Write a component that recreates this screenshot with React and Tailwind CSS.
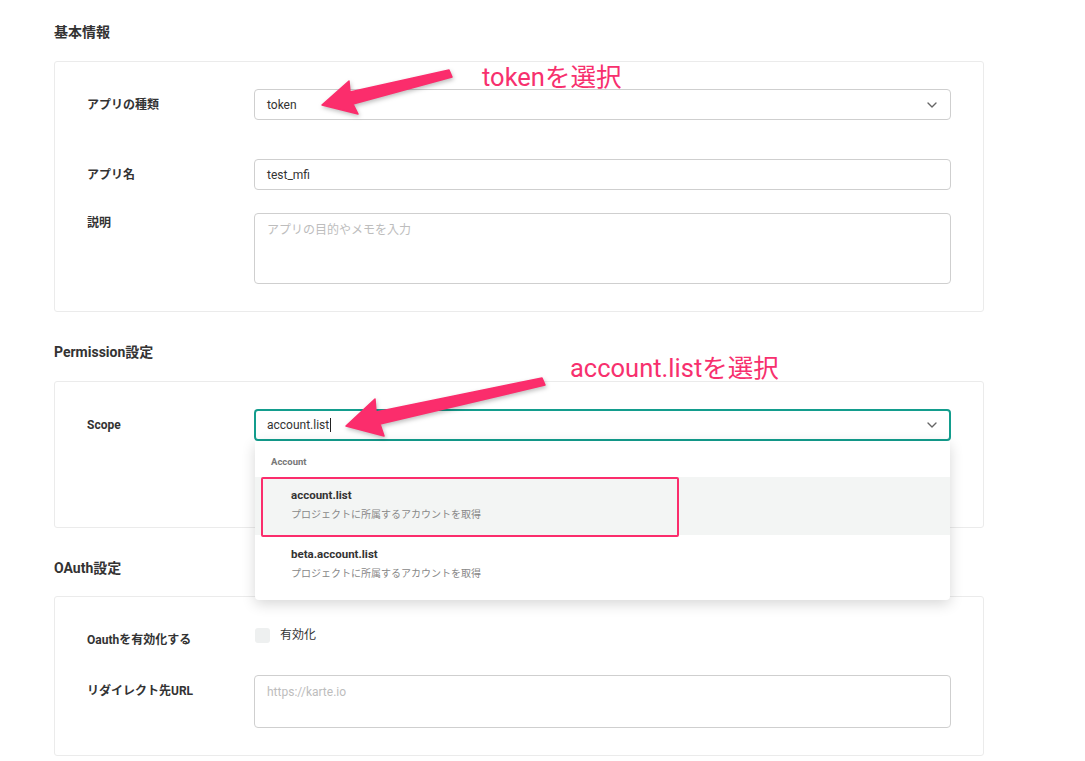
import { ChevronDown } from 'lucide-react';

const PINK = '#fb2d6c';

export default function App() {
  return (
    <div className="relative min-h-[761px] bg-white pl-[54px] pr-[101px] pt-[22px] font-['Roboto','Noto_Sans_CJK_JP',sans-serif] text-[#333]">
      <SectionTitle>基本情報</SectionTitle>
      <Card>
        <Row label="アプリの種類">
          <SelectBox value="token" />
        </Row>
        <Row label="アプリ名" className="mt-[39px]">
          <TextBox value="test_mfi" />
        </Row>
        <div className="mt-[23px] flex items-start">
          <Label>説明</Label>
          <TextArea placeholder="アプリの目的やメモを入力" height="h-[71px]" />
        </div>
      </Card>

      <SectionTitle className="mt-[30px]">Permission設定</SectionTitle>
      <Card className="pb-[86px]">
        <Row label="Scope">
          <div className="relative flex-1">
            <div className="flex h-[32px] items-center justify-between rounded-[4px] border-2 border-[#139d8d] pl-[11px] pr-[9px] text-[12px] text-[#333]">
              <span className="flex items-center">
                account.list
                <span className="ml-px inline-block h-[14px] w-px bg-[#222]" />
              </span>
              <ChevronDown size={16} strokeWidth={2} className="text-[#666]" />
            </div>
            <ScopeMenu />
          </div>
        </Row>
      </Card>

      <SectionTitle className="mt-[30px]">OAuth設定</SectionTitle>
      <Card className="-mt-px">
        <div className="flex h-[31px] items-start">
          <Label className="pt-[6px]">Oauthを有効化する</Label>
          <div className="flex items-start gap-[10px] pl-px">
            <span className="mt-[4px] block h-[15px] w-[15px] rounded-[3px] bg-[#eef0f0]" />
            <span className="text-[12px] leading-[18px] pt-[2px] text-[#333]">有効化</span>
          </div>
        </div>
        <div className="mt-[20px] flex items-start">
          <Label className="pt-[6px]">リダイレクト先URL</Label>
          <TextArea placeholder="https://karte.io" height="h-[53px]" />
        </div>
      </Card>

      <Annotation text="tokenを選択" className="left-[482px] top-[62px]" />
      <Annotation text="account.listを選択" className="left-[570px] top-[353px]" />
      <Arrows />
    </div>
  );
}

function SectionTitle({ children, className = '' }) {
  return (
    <h2 className={`mb-[19px] text-[14px] font-bold leading-[20px] text-[#333] ${className}`}>
      {children}
    </h2>
  );
}

function Card({ children, className = '' }) {
  return (
    <div className={`rounded-[3px] border border-[#ebebeb] px-[32px] py-[27px] ${className}`}>
      {children}
    </div>
  );
}

function Label({ children, className = '' }) {
  return (
    <div className={`w-[167px] shrink-0 text-[12px] font-bold leading-[20px] text-[#333] ${className}`}>
      {children}
    </div>
  );
}

function Row({ label, children, className = '' }) {
  return (
    <div className={`flex items-center ${className}`}>
      <Label>{label}</Label>
      {children}
    </div>
  );
}

function SelectBox({ value }) {
  return (
    <div className="flex h-[31px] flex-1 items-center justify-between rounded-[4px] border border-[#cfcfcf] pl-[12px] pr-[10px] text-[12px] text-[#333]">
      <span>{value}</span>
      <ChevronDown size={16} strokeWidth={2} className="text-[#666]" />
    </div>
  );
}

function TextBox({ value }) {
  return (
    <div className="flex h-[31px] flex-1 items-center rounded-[4px] border border-[#cfcfcf] pl-[12px] text-[12px] text-[#333]">
      {value}
    </div>
  );
}

function TextArea({ placeholder, height }) {
  return (
    <div className={`${height} flex-1 rounded-[4px] border border-[#cfcfcf] pl-[12px] pt-[7px] text-[12px] leading-[18px] text-[#bdbdbd]`}>
      {placeholder}
    </div>
  );
}

// opened scope list, drawn over the card below it
function ScopeMenu() {
  const items = ['account.list', 'beta.account.list'];
  return (
    <div className="absolute left-px right-px top-[32px] z-10 rounded-b-[4px] bg-white pb-[2px] shadow-[0_4px_14px_rgba(0,0,0,0.16)]">
      <div className="pl-[16px] pt-[14px] pb-[8px] text-[9.5px] font-bold leading-[14px] text-[#777]">Account</div>
      {items.map((name, i) => (
        <div
          key={name}
          className={`pl-[36px] ${i === 0 ? 'h-[58px] bg-[#f3f5f4] pt-[10px]' : 'h-[63px] pt-[11px]'}`}
        >
          <div className="text-[11.5px] font-bold leading-[16px] text-[#333]">{name}</div>
          <div className="mt-[5px] text-[10px] leading-[14px] text-[#888]">プロジェクトに所属するアカウントを取得</div>
        </div>
      ))}
      <div className="absolute left-[6px] top-[36px] h-[60px] w-[418px] rounded-[2px] border-2 border-[#fb2d6c]" />
    </div>
  );
}

function Annotation({ text, className }) {
  return (
    <div className={`absolute z-20 text-[25.5px] leading-[30px] text-[#f7306e] ${className}`}>
      {text}
    </div>
  );
}

function Arrows() {
  return (
    <svg
      className="pointer-events-none absolute left-0 top-0 z-20"
      width="1085"
      height="761"
      style={{ filter: 'drop-shadow(1px 2px 2px rgba(0,0,0,0.25))' }}
    >
      <polygon
        fill={PINK}
        strokeLinejoin="round"
        stroke={PINK}
        strokeWidth="1.5"
        points="322,105 349,81 350,92 449,70 452,77 353,104 358,114"
      />
      <polygon
        fill={PINK}
        strokeLinejoin="round"
        stroke={PINK}
        strokeWidth="1.5"
        points="346,426 375,399 376,412 542,378 545,385 380,424 384,436"
      />
    </svg>
  );
}
